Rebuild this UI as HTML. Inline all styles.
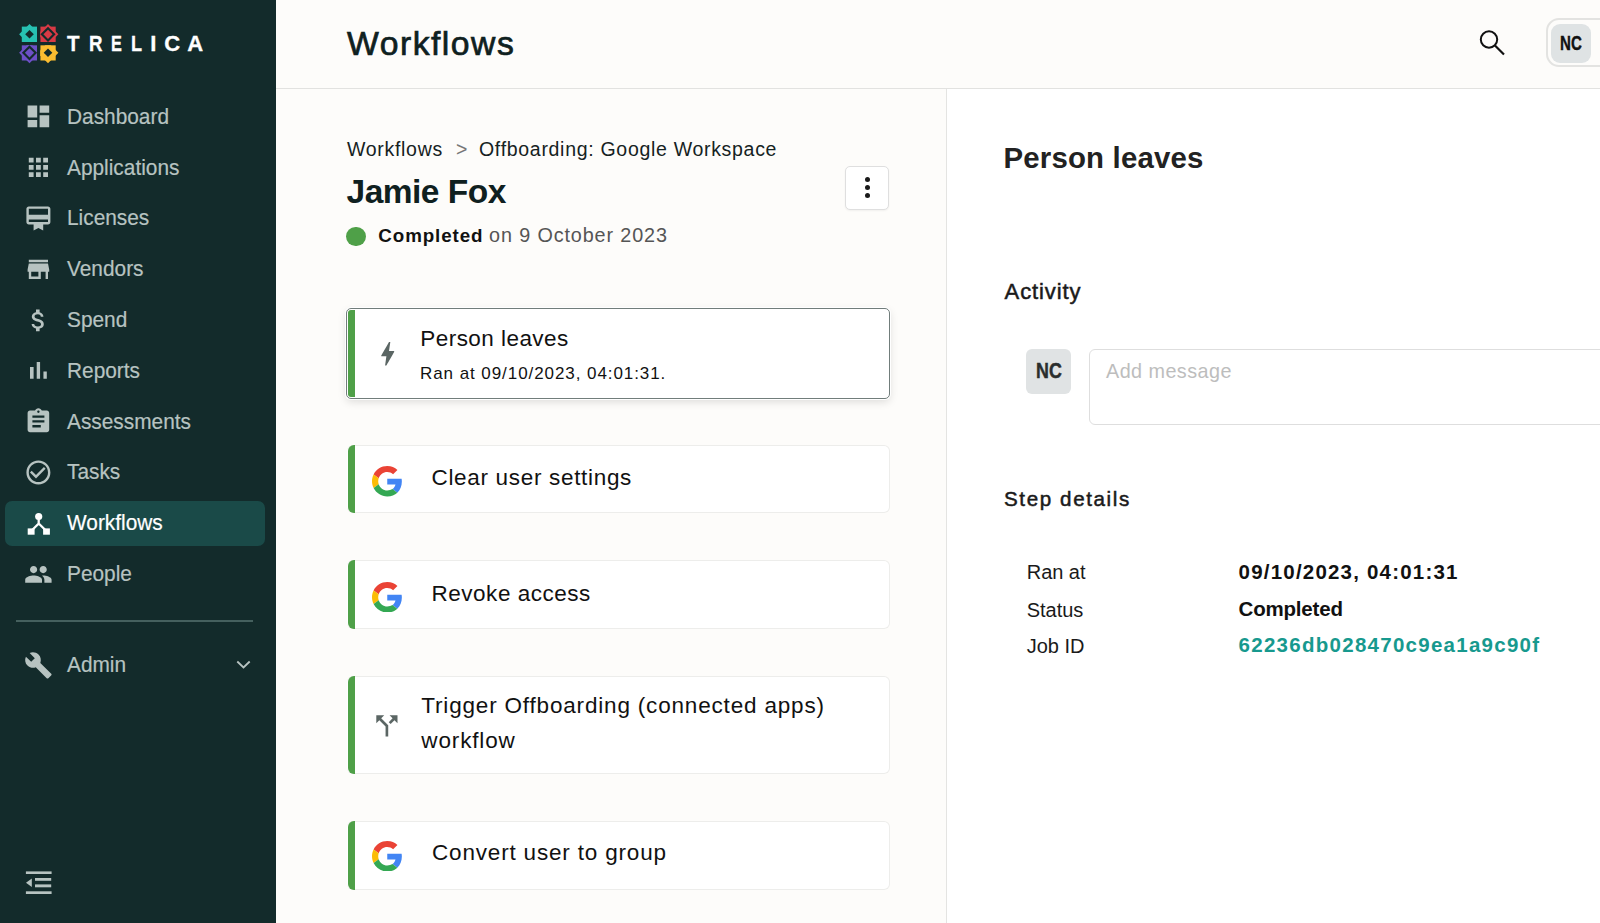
<!DOCTYPE html>
<html><head><meta charset="utf-8"><style>
html,body{margin:0;padding:0;width:1600px;height:923px;overflow:hidden;background:#fff}
.t{position:absolute;white-space:nowrap;line-height:1}
</style></head><body>
<div style="position:absolute;left:0px;top:0px;width:276px;height:923px;background:#132b2b"></div>
<div style="position:absolute;left:276px;top:0px;width:1324px;height:88px;background:#fdfcfa"></div>
<div style="position:absolute;left:276px;top:88px;width:1324px;height:1px;background:#e2e2e0"></div>
<div style="position:absolute;left:276px;top:89px;width:670px;height:834px;background:#fdfcfa"></div>
<div style="position:absolute;left:946px;top:89px;width:1px;height:834px;background:#e4e4e2"></div>
<div style="position:absolute;left:947px;top:89px;width:653px;height:834px;background:#ffffff"></div>
<svg style="position:absolute;left:0;top:0" width="80" height="80" viewBox="0 0 80 80"><clipPath id="c2934"><rect x="0" y="0" width="37" height="42"/></clipPath><g clip-path="url(#c2934)" fill="#27c1b2"><rect x="21.8" y="26.599999999999998" width="15.4" height="15.4"/><path d="M29.5 23.9L39.9 34.3L29.5 44.699999999999996L19.1 34.3Z"/></g><path fill="#132b2b" d="M29.5 29.999999999999996L33.8 34.3L29.5 38.599999999999994L25.2 34.3Z"/><clipPath id="c4834"><rect x="40.2" y="0" width="39.8" height="42"/></clipPath><g clip-path="url(#c4834)" fill="#d83a45"><rect x="40.3" y="26.599999999999998" width="15.4" height="15.4"/><path d="M48 23.9L58.4 34.3L48 44.699999999999996L37.6 34.3Z"/></g><path fill="#132b2b" d="M48 26.699999999999996L55.6 34.3L48 41.9L40.4 34.3Z"/><path fill="#d83a45" d="M48 29.699999999999996L52.6 34.3L48 38.9L43.4 34.3Z"/><clipPath id="c2952"><rect x="0" y="45.2" width="37" height="34.8"/></clipPath><g clip-path="url(#c2952)" fill="#6d50c6"><rect x="21.8" y="45.099999999999994" width="15.4" height="15.4"/><path d="M29.5 42.4L39.9 52.8L29.5 63.199999999999996L19.1 52.8Z"/></g><path fill="#132b2b" d="M29.5 45.199999999999996L37.1 52.8L29.5 60.4L21.9 52.8Z"/><path fill="#6d50c6" d="M29.5 48.199999999999996L34.1 52.8L29.5 57.4L24.9 52.8Z"/><clipPath id="c4852"><rect x="40.2" y="45.2" width="39.8" height="34.8"/></clipPath><g clip-path="url(#c4852)" fill="#fbbd30"><rect x="40.3" y="45.099999999999994" width="15.4" height="15.4"/><path d="M48 42.4L58.4 52.8L48 63.199999999999996L37.6 52.8Z"/></g><path fill="#132b2b" d="M48 48.5L52.3 52.8L48 57.099999999999994L43.7 52.8Z"/></svg>
<div class="t" style="left:67.26px;top:33.47px;font-size:22px;color:#ffffff;font-weight:700;letter-spacing:0px;font-family:'Liberation Sans',sans-serif;-webkit-text-stroke:0.3px #fff;transform:scaleX(0.93);transform-origin:0 0">T</div>
<div class="t" style="left:88.82px;top:33.47px;font-size:22px;color:#ffffff;font-weight:700;letter-spacing:0px;font-family:'Liberation Sans',sans-serif;-webkit-text-stroke:0.3px #fff;transform:scaleX(0.85);transform-origin:0 0">R</div>
<div class="t" style="left:110.91px;top:33.47px;font-size:22px;color:#ffffff;font-weight:700;letter-spacing:0px;font-family:'Liberation Sans',sans-serif;-webkit-text-stroke:0.3px #fff;transform:scaleX(0.74);transform-origin:0 0">E</div>
<div class="t" style="left:131.34px;top:33.47px;font-size:22px;color:#ffffff;font-weight:700;letter-spacing:0px;font-family:'Liberation Sans',sans-serif;-webkit-text-stroke:0.3px #fff;transform:scaleX(0.82);transform-origin:0 0">L</div>
<div class="t" style="left:150.20px;top:33.47px;font-size:22px;color:#ffffff;font-weight:700;letter-spacing:0px;font-family:'Liberation Sans',sans-serif;-webkit-text-stroke:0.3px #fff;transform:scaleX(1);transform-origin:0 0">I</div>
<div class="t" style="left:164.20px;top:33.47px;font-size:22px;color:#ffffff;font-weight:700;letter-spacing:0px;font-family:'Liberation Sans',sans-serif;-webkit-text-stroke:0.3px #fff;transform:scaleX(1);transform-origin:0 0">C</div>
<div class="t" style="left:187.20px;top:33.47px;font-size:22px;color:#ffffff;font-weight:700;letter-spacing:0px;font-family:'Liberation Sans',sans-serif;-webkit-text-stroke:0.3px #fff;transform:scaleX(1);transform-origin:0 0">A</div>
<div style="position:absolute;left:5px;top:501px;width:260px;height:45px;background:#1a4a48;border-radius:7px"></div>
<div class="t" style="left:67.30px;top:105.82px;font-size:22.3px;color:#b7c3c1;font-weight:400;letter-spacing:0px;font-family:'Liberation Sans',sans-serif;transform:scaleX(0.935);transform-origin:0 0;-webkit-text-stroke:0.2px #b7c3c1">Dashboard</div>
<div class="t" style="left:67.30px;top:156.62px;font-size:22.3px;color:#b7c3c1;font-weight:400;letter-spacing:0px;font-family:'Liberation Sans',sans-serif;transform:scaleX(0.935);transform-origin:0 0;-webkit-text-stroke:0.2px #b7c3c1">Applications</div>
<div class="t" style="left:67.30px;top:207.42px;font-size:22.3px;color:#b7c3c1;font-weight:400;letter-spacing:0px;font-family:'Liberation Sans',sans-serif;transform:scaleX(0.935);transform-origin:0 0;-webkit-text-stroke:0.2px #b7c3c1">Licenses</div>
<div class="t" style="left:67.30px;top:258.22px;font-size:22.3px;color:#b7c3c1;font-weight:400;letter-spacing:0px;font-family:'Liberation Sans',sans-serif;transform:scaleX(0.935);transform-origin:0 0;-webkit-text-stroke:0.2px #b7c3c1">Vendors</div>
<div class="t" style="left:67.30px;top:309.02px;font-size:22.3px;color:#b7c3c1;font-weight:400;letter-spacing:0px;font-family:'Liberation Sans',sans-serif;transform:scaleX(0.935);transform-origin:0 0;-webkit-text-stroke:0.2px #b7c3c1">Spend</div>
<div class="t" style="left:67.30px;top:359.82px;font-size:22.3px;color:#b7c3c1;font-weight:400;letter-spacing:0px;font-family:'Liberation Sans',sans-serif;transform:scaleX(0.935);transform-origin:0 0;-webkit-text-stroke:0.2px #b7c3c1">Reports</div>
<div class="t" style="left:67.30px;top:410.62px;font-size:22.3px;color:#b7c3c1;font-weight:400;letter-spacing:0px;font-family:'Liberation Sans',sans-serif;transform:scaleX(0.935);transform-origin:0 0;-webkit-text-stroke:0.2px #b7c3c1">Assessments</div>
<div class="t" style="left:67.30px;top:461.42px;font-size:22.3px;color:#b7c3c1;font-weight:400;letter-spacing:0px;font-family:'Liberation Sans',sans-serif;transform:scaleX(0.935);transform-origin:0 0;-webkit-text-stroke:0.2px #b7c3c1">Tasks</div>
<div class="t" style="left:67.30px;top:512.22px;font-size:22.3px;color:#ffffff;font-weight:400;letter-spacing:0px;font-family:'Liberation Sans',sans-serif;transform:scaleX(0.935);transform-origin:0 0;-webkit-text-stroke:0.2px #ffffff">Workflows</div>
<div class="t" style="left:67.30px;top:563.02px;font-size:22.3px;color:#b7c3c1;font-weight:400;letter-spacing:0px;font-family:'Liberation Sans',sans-serif;transform:scaleX(0.935);transform-origin:0 0;-webkit-text-stroke:0.2px #b7c3c1">People</div>
<svg style="position:absolute;left:24.4px;top:102.4px" width="28.8" height="28.8" viewBox="0 0 24 24"><path fill="#b7c3c1" d="M3 13h8V3H3v10zm0 8h8v-6H3v6zm10 0h8V11h-8v10zm0-18v6h8V3h-8z"/></svg>
<svg style="position:absolute;left:24.4px;top:153.2px" width="28.8" height="28.8" viewBox="0 0 24 24"><path fill="#b7c3c1" d="M4 8h4V4H4v4zm6 12h4v-4h-4v4zm-6 0h4v-4H4v4zm0-6h4v-4H4v4zm6 0h4v-4h-4v4zm6-10v4h4V4h-4zm-6 4h4V4h-4v4zm6 6h4v-4h-4v4zm0 6h4v-4h-4v4z"/></svg>
<svg style="position:absolute;left:24.4px;top:204.0px" width="28.8" height="28.8" viewBox="0 0 24 24"><path fill="#b7c3c1" d="M20 2H4c-1.11 0-2 .89-2 2v11c0 1.11.89 2 2 2h4v5l4-2 4 2v-5h4c1.11 0 2-.89 2-2V4c0-1.11-.89-2-2-2zm0 13H4v-2h16v2zm0-6H4V4h16v5z"/></svg>
<svg style="position:absolute;left:24.4px;top:254.79999999999995px" width="28.8" height="28.8" viewBox="0 0 24 24"><path fill="#b7c3c1" d="M20 4H4v2h16V4zm1 10v-2l-1-5H4l-1 5v2h1v6h10v-6h4v6h2v-6h1zm-9 4H6v-4h6v4z"/></svg>
<svg style="position:absolute;left:24.4px;top:305.6px" width="28.8" height="28.8" viewBox="0 0 24 24"><path fill="#b7c3c1" d="M11.8 10.9c-2.27-.59-3-1.2-3-2.15 0-1.09 1.01-1.85 2.7-1.85 1.78 0 2.44.85 2.5 2.1h2.21c-.07-1.72-1.12-3.3-3.21-3.81V3h-3v2.16c-1.94.42-3.5 1.68-3.5 3.61 0 2.31 1.91 3.46 4.7 4.13 2.5.6 3 1.48 3 2.41 0 .69-.49 1.79-2.7 1.79-2.06 0-2.87-.92-2.98-2.1h-2.2c.12 2.19 1.76 3.42 3.68 3.83V21h3v-2.15c1.95-.37 3.5-1.5 3.5-3.55 0-2.84-2.43-3.81-4.7-4.4z"/></svg>
<svg style="position:absolute;left:24.4px;top:356.4px" width="28.8" height="28.8" viewBox="0 0 24 24"><path fill="#b7c3c1" d="M5 9.2h3V19H5V9.2zM10.6 5h2.8v14h-2.8V5zm5.6 8H19v6h-2.8v-6z"/></svg>
<svg style="position:absolute;left:24.4px;top:407.19999999999993px" width="28.8" height="28.8" viewBox="0 0 24 24"><path fill="#b7c3c1" d="M19 3h-4.18C14.4 1.84 13.3 1 12 1c-1.3 0-2.4.84-2.82 2H5c-1.1 0-2 .9-2 2v14c0 1.1.9 2 2 2h14c1.1 0 2-.9 2-2V5c0-1.1-.9-2-2-2zm-7 0c.55 0 1 .45 1 1s-.45 1-1 1-1-.45-1-1 .45-1 1-1zm2 14H7v-2h7v2zm3-4H7v-2h10v2zm0-4H7V7h10v2z"/></svg>
<svg style="position:absolute;left:24.4px;top:458.0px" width="28.8" height="28.8" viewBox="0 0 24 24"><path fill="#b7c3c1" d="M16.59 7.58L10 14.17l-3.59-3.58L5 12l5 5 8-8zM12 2C6.48 2 2 6.48 2 12s4.48 10 10 10 10-4.48 10-10S17.52 2 12 2zm0 18c-4.42 0-8-3.58-8-8s3.58-8 8-8 8 3.58 8 8-3.58 8-8 8z"/></svg>
<svg style="position:absolute;left:24.4px;top:559.6px" width="28.8" height="28.8" viewBox="0 0 24 24"><path fill="#b7c3c1" d="M16 11c1.66 0 2.99-1.34 2.99-3S17.66 5 16 5c-1.66 0-3 1.34-3 3s1.34 3 3 3zm-8 0c1.66 0 2.99-1.34 2.99-3S9.66 5 8 5C6.34 5 5 6.34 5 8s1.34 3 3 3zm0 2c-2.33 0-7 1.17-7 3.5V19h14v-2.5c0-2.330-4.67-3.5-7-3.5zm8 0c-.29 0-.62.02-.97.05 1.16.84 1.97 1.97 1.97 3.45V19h6v-2.5c0-2.33-4.67-3.5-7-3.5z"/></svg>
<svg style="position:absolute;left:0;top:490px" width="80" height="60" viewBox="0 490 80 60"><circle cx="38.7" cy="516.5" r="3.6" fill="#fff"/><path d="M38.7 519v4.5L31.2 531M38.7 523.5L46.4 531" stroke="#fff" stroke-width="2.3" fill="none"/><rect x="27.7" y="528.4" width="6.9" height="6.3" fill="#fff"/><rect x="43.1" y="528.4" width="6.8" height="6.3" fill="#fff"/></svg>
<svg style="position:absolute;left:24.4px;top:650.5px" width="28.8" height="28.8" viewBox="0 0 24 24"><path fill="#b7c3c1" d="M22.7 19l-9.1-9.1c.9-2.3.4-5-1.5-6.9-2-2-5-2.4-7.4-1.3L9 6 6 9 1.6 4.7C.4 7.1.9 10.1 2.9 12.1c1.9 1.9 4.6 2.4 6.9 1.5l9.1 9.1c.4.4 1 .4 1.4 0l2.3-2.3c.5-.4.5-1.1.1-1.4z"/></svg>
<svg style="position:absolute;left:230px;top:655px" width="26" height="20" viewBox="230 655 26 20"><path d="M237.3 661.5L243.5 667.5L249.7 661.5" stroke="#b7c3c1" stroke-width="1.8" fill="none"/></svg>
<svg style="position:absolute;left:20px;top:865px" width="40" height="35" viewBox="20 865 40 35"><g fill="#b7c3c1"><rect x="25.9" y="871.4" width="25.7" height="2.6"/><rect x="35" y="878" width="16.2" height="2.8"/><rect x="35" y="884.4" width="16.2" height="2.9"/><rect x="25.9" y="891.3" width="25.7" height="2.7"/><path d="M31.8 878.6V887L26 882.8Z"/></g></svg>
<div style="position:absolute;left:16px;top:620px;width:237px;height:1.5px;background:#45605e"></div>
<div class="t" style="left:67.30px;top:653.92px;font-size:22.3px;color:#b7c3c1;font-weight:400;letter-spacing:0px;font-family:'Liberation Sans',sans-serif;transform:scaleX(0.935);transform-origin:0 0;-webkit-text-stroke:0.2px #b7c3c1">Admin</div>
<div class="t" style="left:347.00px;top:26.87px;font-size:33.7px;color:#0f2020;font-weight:400;letter-spacing:1.5px;font-family:'Liberation Sans',sans-serif;-webkit-text-stroke:0.7px #0f2020">Workflows</div>
<div class="t" style="left:347.00px;top:140.49px;font-size:19.5px;color:#152222;font-weight:400;letter-spacing:0.7px;font-family:'Liberation Sans',sans-serif;">Workflows</div>
<div class="t" style="left:456.00px;top:140.49px;font-size:19.5px;color:#777;font-weight:400;letter-spacing:0px;font-family:'Liberation Sans',sans-serif;">&gt;</div>
<div class="t" style="left:479.00px;top:140.49px;font-size:19.5px;color:#152222;font-weight:400;letter-spacing:0.7px;font-family:'Liberation Sans',sans-serif;">Offboarding: Google Workspace</div>
<div class="t" style="left:346.50px;top:174.84px;font-size:33.5px;color:#0f2020;font-weight:700;letter-spacing:-0.5px;font-family:'Liberation Sans',sans-serif;">Jamie Fox</div>
<div style="position:absolute;left:346.3px;top:226.9px;width:19.5px;height:19.5px;background:#4fa048;border-radius:50%"></div>
<div class="t" style="left:378.30px;top:227.18px;font-size:18.8px;color:#111;font-weight:700;letter-spacing:0.9px;font-family:'Liberation Sans',sans-serif;">Completed</div>
<div class="t" style="left:489.00px;top:226.34px;font-size:19.8px;color:#555;font-weight:400;letter-spacing:0.88px;font-family:'Liberation Sans',sans-serif;">on 9 October 2023</div>
<div style="position:absolute;left:845px;top:165.5px;width:44px;height:44px;box-sizing:border-box;background:#fff;border:1.5px solid #dfdfdf;border-radius:5px;box-shadow:0 1px 2px rgba(0,0,0,0.05)"></div>
<div style="position:absolute;left:864.6px;top:177.3px;width:5px;height:5px;background:#1a1a1a;border-radius:50%"></div>
<div style="position:absolute;left:864.6px;top:185.0px;width:5px;height:5px;background:#1a1a1a;border-radius:50%"></div>
<div style="position:absolute;left:864.6px;top:192.8px;width:5px;height:5px;background:#1a1a1a;border-radius:50%"></div>
<div style="position:absolute;left:346.3px;top:308.0px;width:543.3px;height:90.9px;box-sizing:border-box;background:#fff;border:1.9px solid #717d7b;border-radius:5px;box-shadow:0 0 0 1px #fff,0 3px 8px rgba(0,0,0,0.13);overflow:hidden"></div>
<div style="position:absolute;left:347.9px;top:309.8px;width:7px;height:87.4px;background:#4fa048;border-radius:3px 0 0 3px"></div>
<div style="position:absolute;left:346.6px;top:444.6px;width:543px;height:68.6px;box-sizing:border-box;background:#fff;border:1px solid #ededeb;border-left:none;border-radius:6px;overflow:hidden"></div>
<div style="position:absolute;left:347.6px;top:444.6px;width:7.2px;height:68.6px;background:#4fa048;border-radius:6px 0 0 6px"></div>
<div style="position:absolute;left:346.6px;top:560px;width:543px;height:69.3px;box-sizing:border-box;background:#fff;border:1px solid #ededeb;border-left:none;border-radius:6px;overflow:hidden"></div>
<div style="position:absolute;left:347.6px;top:560px;width:7.2px;height:69.3px;background:#4fa048;border-radius:6px 0 0 6px"></div>
<div style="position:absolute;left:346.6px;top:676px;width:543px;height:97.6px;box-sizing:border-box;background:#fff;border:1px solid #ededeb;border-left:none;border-radius:6px;overflow:hidden"></div>
<div style="position:absolute;left:347.6px;top:676px;width:7.2px;height:97.6px;background:#4fa048;border-radius:6px 0 0 6px"></div>
<div style="position:absolute;left:346.6px;top:821.3px;width:543px;height:68.5px;box-sizing:border-box;background:#fff;border:1px solid #ededeb;border-left:none;border-radius:6px;overflow:hidden"></div>
<div style="position:absolute;left:347.6px;top:821.3px;width:7.2px;height:68.5px;background:#4fa048;border-radius:6px 0 0 6px"></div>
<div class="t" style="left:420.30px;top:327.85px;font-size:22.5px;color:#111;font-weight:400;letter-spacing:0.45px;font-family:'Liberation Sans',sans-serif;">Person leaves</div>
<div class="t" style="left:420.00px;top:364.71px;font-size:17px;color:#111;font-weight:400;letter-spacing:0.93px;font-family:'Liberation Sans',sans-serif;">Ran at 09/10/2023, 04:01:31.</div>
<div class="t" style="left:431.50px;top:466.55px;font-size:22.5px;color:#111;font-weight:400;letter-spacing:0.68px;font-family:'Liberation Sans',sans-serif;">Clear user settings</div>
<div class="t" style="left:431.50px;top:582.55px;font-size:22.5px;color:#111;font-weight:400;letter-spacing:0.52px;font-family:'Liberation Sans',sans-serif;">Revoke access</div>
<div class="t" style="left:421.30px;top:694.55px;font-size:22.5px;color:#111;font-weight:400;letter-spacing:0.82px;font-family:'Liberation Sans',sans-serif;">Trigger Offboarding (connected apps)</div>
<div class="t" style="left:421.30px;top:729.75px;font-size:22.5px;color:#111;font-weight:400;letter-spacing:0.86px;font-family:'Liberation Sans',sans-serif;">workflow</div>
<div class="t" style="left:432.00px;top:842.45px;font-size:22.5px;color:#111;font-weight:400;letter-spacing:0.82px;font-family:'Liberation Sans',sans-serif;">Convert user to group</div>
<svg style="position:absolute;left:372.2px;top:466px" width="30.5" height="30.5" viewBox="0 0 48 48"><path fill="#EA4335" d="M24 9.5c3.54 0 6.71 1.22 9.21 3.6l6.85-6.85C35.9 2.38 30.47 0 24 0 14.62 0 6.51 5.38 2.56 13.22l7.98 6.19C12.43 13.72 17.74 9.5 24 9.5z"/><path fill="#4285F4" d="M46.98 24.55c0-1.57-.15-3.09-.38-4.55H24v9.02h12.94c-.58 2.96-2.26 5.48-4.78 7.18l7.73 6c4.51-4.18 7.090-10.36 7.09-17.65z"/><path fill="#FBBC05" d="M10.53 28.59c-.48-1.45-.76-2.99-.76-4.59s.27-3.14.76-4.59l-7.98-6.19C.92 16.46 0 20.12 0 24c0 3.88.92 7.54 2.56 10.78l7.97-6.19z"/><path fill="#34A853" d="M24 48c6.48 0 11.930-2.13 15.89-5.81l-7.73-6c-2.15 1.45-4.92 2.3-8.16 2.3-6.26 0-11.57-4.22-13.47-9.91l-7.98 6.19C6.51 42.62 14.62 48 24 48z"/></svg>
<svg style="position:absolute;left:371.8px;top:581.5px" width="30.5" height="30.5" viewBox="0 0 48 48"><path fill="#EA4335" d="M24 9.5c3.54 0 6.71 1.22 9.21 3.6l6.85-6.85C35.9 2.38 30.47 0 24 0 14.62 0 6.51 5.38 2.56 13.22l7.98 6.19C12.43 13.72 17.74 9.5 24 9.5z"/><path fill="#4285F4" d="M46.98 24.55c0-1.57-.15-3.09-.38-4.55H24v9.02h12.94c-.58 2.96-2.26 5.48-4.78 7.18l7.73 6c4.51-4.18 7.090-10.36 7.09-17.65z"/><path fill="#FBBC05" d="M10.53 28.59c-.48-1.45-.76-2.99-.76-4.59s.27-3.14.76-4.59l-7.98-6.19C.92 16.46 0 20.12 0 24c0 3.88.92 7.54 2.56 10.78l7.97-6.19z"/><path fill="#34A853" d="M24 48c6.48 0 11.930-2.13 15.89-5.81l-7.73-6c-2.15 1.45-4.92 2.3-8.16 2.3-6.26 0-11.57-4.22-13.47-9.91l-7.98 6.19C6.51 42.62 14.62 48 24 48z"/></svg>
<svg style="position:absolute;left:371.8px;top:840.8px" width="30.5" height="30.5" viewBox="0 0 48 48"><path fill="#EA4335" d="M24 9.5c3.54 0 6.71 1.22 9.21 3.6l6.85-6.85C35.9 2.38 30.47 0 24 0 14.62 0 6.51 5.38 2.56 13.22l7.98 6.19C12.43 13.72 17.74 9.5 24 9.5z"/><path fill="#4285F4" d="M46.98 24.55c0-1.57-.15-3.09-.38-4.55H24v9.02h12.94c-.58 2.96-2.26 5.48-4.78 7.18l7.73 6c4.51-4.18 7.090-10.36 7.09-17.65z"/><path fill="#FBBC05" d="M10.53 28.59c-.48-1.45-.76-2.99-.76-4.59s.27-3.14.76-4.59l-7.98-6.19C.92 16.46 0 20.12 0 24c0 3.88.92 7.54 2.56 10.78l7.97-6.19z"/><path fill="#34A853" d="M24 48c6.48 0 11.930-2.13 15.89-5.81l-7.73-6c-2.15 1.45-4.92 2.3-8.16 2.3-6.26 0-11.57-4.22-13.47-9.91l-7.98 6.19C6.51 42.62 14.62 48 24 48z"/></svg>
<svg style="position:absolute;left:371.5px;top:337.7px" width="31.4" height="31.4" viewBox="0 0 24 24"><path fill="#5b6664" d="M11 21h-1l1-7H7.5c-.58 0-.57-.32-.38-.66.19-.34.05-.08.07-.12C8.48 10.94 10.42 7.54 13 3h1l-1 7h3.5c.49 0 .56.33.47.51l-.07.15C12.96 17.55 11 21 11 21z"/></svg>
<svg style="position:absolute;left:371.4px;top:709.5px" width="31.8" height="31.8" viewBox="0 0 24 24"><path fill="#5b6664" d="M14 4l2.29 2.29-2.88 2.88 1.42 1.42 2.88-2.88L20 10V4h-6zm-4 0H4v6l2.29-2.29 4.71 4.7V20h2v-8.410l-5.29-5.3L10 4z"/></svg>
<div class="t" style="left:1003.50px;top:142.81px;font-size:29.4px;color:#222;font-weight:700;letter-spacing:0.18px;font-family:'Liberation Sans',sans-serif;">Person leaves</div>
<div class="t" style="left:1004.60px;top:281.17px;font-size:22px;color:#1a1a1a;font-weight:400;letter-spacing:0.9px;font-family:'Liberation Sans',sans-serif;-webkit-text-stroke:0.5px #1a1a1a">Activity</div>
<div style="position:absolute;left:1026.4px;top:348.75px;width:45px;height:45px;background:#e0e3e4;border-radius:6px"></div>
<div style="position:absolute;left:1088.9px;top:348.75px;width:600px;height:75.75px;box-sizing:border-box;border:1.5px solid #dedede;border-radius:6px;background:#fff"></div>
<div class="t" style="left:1106.00px;top:362.24px;font-size:19.8px;color:#bdbdbd;font-weight:400;letter-spacing:0.45px;font-family:'Liberation Sans',sans-serif;">Add message</div>
<div class="t" style="left:1004.00px;top:489.26px;font-size:20.6px;color:#1a1a1a;font-weight:400;letter-spacing:1.6px;font-family:'Liberation Sans',sans-serif;-webkit-text-stroke:0.5px #1a1a1a">Step details</div>
<div class="t" style="left:1026.80px;top:562.47px;font-size:20px;color:#1a1a1a;font-weight:400;letter-spacing:-0.05px;font-family:'Liberation Sans',sans-serif;">Ran at</div>
<div class="t" style="left:1238.60px;top:562.04px;font-size:20.5px;color:#111;font-weight:700;letter-spacing:1.2px;font-family:'Liberation Sans',sans-serif;">09/10/2023, 04:01:31</div>
<div class="t" style="left:1026.80px;top:599.57px;font-size:20px;color:#1a1a1a;font-weight:400;letter-spacing:-0.05px;font-family:'Liberation Sans',sans-serif;">Status</div>
<div class="t" style="left:1238.60px;top:599.14px;font-size:20.5px;color:#111;font-weight:700;letter-spacing:-0.2px;font-family:'Liberation Sans',sans-serif;">Completed</div>
<div class="t" style="left:1026.80px;top:635.57px;font-size:20px;color:#1a1a1a;font-weight:400;letter-spacing:-0.05px;font-family:'Liberation Sans',sans-serif;">Job ID</div>
<div class="t" style="left:1238.60px;top:635.14px;font-size:20.5px;color:#17998e;font-weight:700;letter-spacing:1.27px;font-family:'Liberation Sans',sans-serif;">62236db028470c9ea1a9c90f</div>
<div style="position:absolute;left:1546.3px;top:18.3px;width:120px;height:49.2px;box-sizing:border-box;border:2px solid #e3e3e1;border-radius:13px;background:#fdfcfa"></div>
<div style="position:absolute;left:1551px;top:23.6px;width:39.6px;height:39px;background:#dfe3e4;border-radius:9px"></div>
<div class="t" style="left:1560.00px;top:33.07px;font-size:20px;color:#111;font-weight:700;letter-spacing:0px;font-family:'Liberation Sans',sans-serif;transform:scaleX(0.755);transform-origin:0 0;-webkit-text-stroke:0.4px #111">NC</div>
<div class="t" style="left:1035.80px;top:359.87px;font-size:22.3px;color:#2a2e2e;font-weight:700;letter-spacing:0px;font-family:'Liberation Sans',sans-serif;transform:scaleX(0.8);transform-origin:0 0;-webkit-text-stroke:0.45px #2a2e2e">NC</div>
<svg style="position:absolute;left:1470px;top:20px" width="45" height="45" viewBox="1470 20 45 45"><circle cx="1489" cy="39.5" r="8.2" stroke="#111" stroke-width="2" fill="none"/><path d="M1495 45.5L1504 54.5" stroke="#111" stroke-width="2.2" fill="none"/></svg>
</body></html>
